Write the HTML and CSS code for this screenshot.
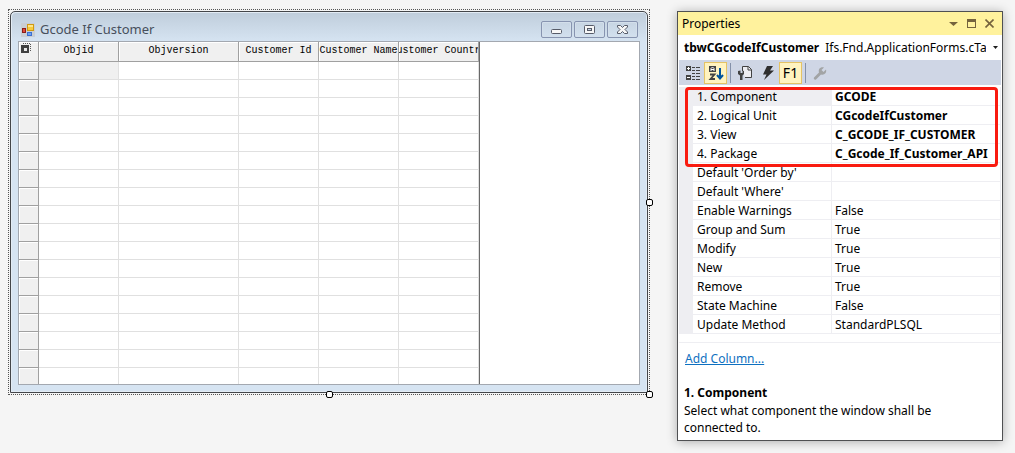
FILE: index.html
```
<!DOCTYPE html>
<html lang="en">
<head>
<meta charset="utf-8">
<title>Gcode If Customer</title>
<link rel="stylesheet" href="styles.css">
</head>
<body>
<main class="designer">
  <section class="selection">
    <div class="form-window">
      <header class="form-title">
        <svg class="form-icon" width="14" height="14" viewBox="0 0 14 14" aria-hidden="true">
          <rect width="14" height="14" fill="#c9ced4"/>
          <rect x="6.5" y="1.5" width="6" height="6" fill="#f8cb3c" stroke="#d09a12"/>
          <path d="M7 2h5v2H7z" fill="#fce68a"/>
          <rect x="1.5" y="5.500" width="3" height="4" fill="#e04a3c" stroke="#8c1d18"/>
          <rect x="6.500" y="9.500" width="4" height="3" fill="#6ea2f2" stroke="#3b6fd0"/>
        </svg>
        <h1 class="form-name">Gcode If Customer</h1>
        <div class="form-buttons">
          <button class="form-button" type="button" aria-label="Minimize">
            <svg width="13" height="11" viewBox="0 0 13 11"><rect x="1.500" y="5.500" width="10" height="4" rx="1" fill="#f7f7f7" stroke="#565b68"/></svg>
          </button>
          <button class="form-button" type="button" aria-label="Maximize">
            <svg width="13" height="11" viewBox="0 0 13 11"><rect x="1.500" y="1.500" width="10" height="8" rx="1" fill="#f7f7f7" stroke="#565b68"/><rect x="4.500" y="4.500" width="4" height="2" fill="#c9d6e6" stroke="#565b68"/></svg>
          </button>
          <button class="form-button" type="button" aria-label="Close">
            <svg width="13" height="11" viewBox="0 0 13 11"><path d="M1.500 1.500h3l2 2 2-2h3v1.500l-2.500 2.500 2.500 2.500v1.500h-3l-2-2-2 2h-3V8L4 5.500 1.500 3z" fill="#f7f7f7" stroke="#565b68"/></svg>
          </button>
        </div>
      </header>
      <div class="form-client">
        <table class="grid">
          <colgroup><col class="col-head"><col class="col-std"><col class="col-wide"><col class="col-std"><col class="col-std"><col class="col-std"></colgroup>
          <thead>
            <tr>
              <th class="corner" aria-label="Select all"><svg width="16" height="14" viewBox="0 0 16 14"><path d="M2 3h8v8H2z" fill="#404040"/><path d="M5 6h3v3H5z" fill="#e8e8e8"/><path d="M4 1.500h8M11.500 2v7" stroke="#555" stroke-dasharray="1 1" fill="none"/></svg></th>
              <th><div class="caption">Objid</div></th>
              <th><div class="caption">Objversion</div></th>
              <th><div class="caption">Customer Id</div></th>
              <th><div class="caption">Customer Name</div></th>
              <th><div class="caption">Customer Country</div></th>
            </tr>
          </thead>
          <tbody>
            <tr><th></th><td class="current"></td><td></td><td></td><td></td><td></td></tr>
            <tr><th></th><td></td><td></td><td></td><td></td><td></td></tr>
            <tr><th></th><td></td><td></td><td></td><td></td><td></td></tr>
            <tr><th></th><td></td><td></td><td></td><td></td><td></td></tr>
            <tr><th></th><td></td><td></td><td></td><td></td><td></td></tr>
            <tr><th></th><td></td><td></td><td></td><td></td><td></td></tr>
            <tr><th></th><td></td><td></td><td></td><td></td><td></td></tr>
            <tr><th></th><td></td><td></td><td></td><td></td><td></td></tr>
            <tr><th></th><td></td><td></td><td></td><td></td><td></td></tr>
            <tr><th></th><td></td><td></td><td></td><td></td><td></td></tr>
            <tr><th></th><td></td><td></td><td></td><td></td><td></td></tr>
            <tr><th></th><td></td><td></td><td></td><td></td><td></td></tr>
            <tr><th></th><td></td><td></td><td></td><td></td><td></td></tr>
            <tr><th></th><td></td><td></td><td></td><td></td><td></td></tr>
            <tr><th></th><td></td><td></td><td></td><td></td><td></td></tr>
            <tr><th></th><td></td><td></td><td></td><td></td><td></td></tr>
            <tr><th></th><td></td><td></td><td></td><td></td><td></td></tr>
            <tr class="cut"><th></th><td></td><td></td><td></td><td></td><td></td></tr>
          </tbody>
        </table>
      </div>
    </div>
    <span class="handle handle-right"></span>
    <span class="handle handle-bottom"></span>
    <span class="handle handle-corner"></span>
  </section>

  <aside class="panel">
    <header class="panel-title">
      <h2 class="panel-name">Properties</h2>
      <button class="panel-button" type="button" aria-label="Window position"><svg width="9" height="9" viewBox="0 0 9 9"><path d="M0 3h9L4.500 7z" fill="#75633d"/></svg></button>
      <button class="panel-button" type="button" aria-label="Maximize"><svg width="9" height="9" viewBox="0 0 9 9"><path d="M0 0h9v9H0zM1 3v5h7V3z" fill="#75633d" fill-rule="evenodd"/></svg></button>
      <button class="panel-button" type="button" aria-label="Close"><svg width="9" height="9" viewBox="0 0 9 9"><path d="M.5.5l8 8M8.500.5l-8 8" stroke="#75633d" stroke-width="1.600"/></svg></button>
    </header>
    <div class="object-row">
      <label class="object-name" for="object">tbwCGcodeIfCustomer</label>
      <select class="object-type" id="object"><option>Ifs.Fnd.ApplicationForms.cTableWindow</option></select>
      <svg class="object-arrow" width="7" height="4" viewBox="0 0 7 4" aria-hidden="true"><path d="M1 0h5L3.500 3z" fill="#1e1e1e"/></svg>
    </div>
    <div class="toolbar">
      <button class="tool" type="button" aria-label="Categorized">
        <svg width="16" height="16" viewBox="0 0 16 16"><path d="M1 1h5v5H1zM1 10h5v5H1z" fill="#424242"/><path d="M2 3h3v1H2zM3 2h1v3H3zM2 12h3v1H2z" fill="#fff"/><path d="M7 2.500h3m1 0h4M7 5.500h3m1 0h4M7 8.500h3m1 0h4M7 11.500h3m1 0h4M7 14.500h3m1 0h4" stroke="#424242"/></svg>
      </button>
      <button class="tool tool-on" type="button" aria-label="Alphabetical" aria-pressed="true">
        <svg width="16" height="16" viewBox="0 0 16 16"><path d="M1 1h7v6H1z" fill="#424242"/><path d="M3 6V3.500L4.500 2 6 3.500V6M3 4.500h3" stroke="#fff" fill="none"/><path d="M2 9.500h4.500L2.500 14H7" stroke="#424242" stroke-width="1.800" fill="none"/><path d="M12 3v10M9 10l3 3.500 3-3.500" stroke="#00539c" stroke-width="2" fill="none"/></svg>
      </button>
      <span class="divider"></span>
      <button class="tool" type="button" aria-label="Properties">
        <svg width="16" height="16" viewBox="0 0 16 16"><path d="M5.500 6V1.500h6l3 3v8H8" fill="#eeeef2" stroke="#424242"/><path d="M11 1.500v3.500h3.500" fill="none" stroke="#424242"/><path d="M1 6v3l2 1.500V15h2.500v-4.500L7 9V6L5.500 5.500V8h-2V5.500z" fill="#424242"/></svg>
      </button>
      <button class="tool" type="button" aria-label="Events">
        <svg width="16" height="16" viewBox="0 0 16 16"><path d="M7 1h6L10 5.500h4L4 15l2.500-5.500H3z" fill="#2f2f2f"/></svg>
      </button>
      <button class="tool tool-on tool-text" type="button">F1</button>
      <span class="divider"></span>
      <button class="tool" type="button" aria-label="Property pages" disabled>
        <svg width="16" height="16" viewBox="0 0 16 16"><path d="M2 12.500L7 7.500C6 4 8.500 1.500 12 2.500L9.500 5l2 2L14 4.500C15 8 12 10.500 9 9.500l-5 5c-1.300.8-2.800-.7-2-2z" fill="#a2a4a5"/></svg>
      </button>
    </div>
    <div class="property-area">
      <table class="properties">
        <colgroup><col class="col-gutter"><col class="col-name"><col></colgroup>
        <tbody>
          <tr class="selected changed"><td></td><th scope="row">1. Component</th><td>GCODE</td></tr>
          <tr class="changed"><td></td><th scope="row">2. Logical Unit</th><td>CGcodeIfCustomer</td></tr>
          <tr class="changed"><td></td><th scope="row">3. View</th><td>C_GCODE_IF_CUSTOMER</td></tr>
          <tr class="changed"><td></td><th scope="row">4. Package</th><td>C_Gcode_If_Customer_API</td></tr>
          <tr><td></td><th scope="row">Default 'Order by'</th><td></td></tr>
          <tr><td></td><th scope="row">Default 'Where'</th><td></td></tr>
          <tr><td></td><th scope="row">Enable Warnings</th><td>False</td></tr>
          <tr><td></td><th scope="row">Group and Sum</th><td>True</td></tr>
          <tr><td></td><th scope="row">Modify</th><td>True</td></tr>
          <tr><td></td><th scope="row">New</th><td>True</td></tr>
          <tr><td></td><th scope="row">Remove</th><td>True</td></tr>
          <tr><td></td><th scope="row">State Machine</th><td>False</td></tr>
          <tr><td></td><th scope="row">Update Method</th><td>StandardPLSQL</td></tr>
        </tbody>
      </table>
      <span class="highlight"></span>
    </div>
    <div class="commands"><a class="command" href="#add-column">Add Column...</a></div>
    <div class="help">
      <h3 class="help-title">1. Component</h3>
      <p class="help-text">Select what component the window shall be connected to.</p>
    </div>
  </aside>
</main>
</body>
</html>
```
FILE: styles.css
```
* { box-sizing: border-box; }

body {
  margin: 0;
  background: #f5f5f5;
  color: #000;
  font-family: "Noto Sans", "Open Sans", sans-serif;
  font-size: 12px;
  line-height: 17px;
}

h1, h2, h3, p { margin: 0; font-size: inherit; font-weight: normal; }

button {
  padding: 0;
  border: 0;
  background: none;
  color: inherit;
  font: inherit;
}

svg { display: block; }

.designer {
  display: flex;
  align-items: flex-start;
  gap: 27px;
  padding: 9px 12px 12px 8px;
}

/* Form under design */
.selection {
  position: relative;
  flex: 1;
  min-width: 500px;
  padding: 1px;
  border: 1px dotted #555;
}

.form-window {
  padding: 0 7px 7px;
  border: 1px solid #44464a;
  border-radius: 5px 5px 0 0;
  background: linear-gradient(#bfcddb, #d6e4f2 30px);
  box-shadow: inset 1px 1px #e3ecf5, inset -1px -1px #e3ecf5;
}

.form-title {
  display: flex;
  align-items: center;
  gap: 5px;
  height: 29px;
  padding: 6px 2px 0 3px;
}

.form-name {
  flex: 1;
  color: #474f5c;
  font-size: 13px;
}

.form-buttons { display: flex; gap: 2px; }

.form-button {
  display: flex;
  align-items: center;
  justify-content: center;
  width: 31px;
  height: 17px;
  border: 1px solid #8794b0;
  border-radius: 2px;
  box-shadow: inset 0 0 0 1px #d3dfeb;
}

.form-client {
  border: 1px solid #a3a8b0;
  background: #fff;
}

.grid {
  width: 461px;
  table-layout: fixed;
  border-collapse: separate;
  border-spacing: 0;
  border-right: 1px solid #696969;
}

.grid th, .grid td {
  height: 18px;
  padding: 0;
  border-right: 1px solid #e0e0e0;
  border-bottom: 1px solid #e0e0e0;
}

.grid th {
  border-color: #a0a0a0;
  background: #f0f0f0;
  box-shadow: inset 1px 1px #fff;
}

.grid thead th {
  height: 20px;
  vertical-align: top;
}

.grid .current { background: #f0f0f0; }

.grid .cut th, .grid .cut td {
  height: 16px;
  border-bottom: 0;
}

.col-head { width: 20px; }
.col-std { width: 80px; }
.col-wide { width: 120px; }

.caption {
  display: flex;
  justify-content: center;
  overflow: hidden;
  font: 10px/17px "Liberation Mono", monospace;
  white-space: nowrap;
}

.handle {
  position: absolute;
  width: 7px;
  height: 7px;
  border: 1px solid #000;
  border-radius: 2px;
  background: #fff;
}

.handle-right { right: -4px; top: 50%; margin-top: -3px; }
.handle-bottom { bottom: -4px; left: 50%; margin-left: -3px; }
.handle-corner { right: -4px; bottom: -4px; }

/* Properties panel */
.panel {
  width: 326px;
  margin-top: 2px;
  border: 1px solid #4f5052;
  background: #fff;
  box-shadow: 0 1px 10px rgba(0, 0, 0, 0.3);
}

.panel-title {
  display: flex;
  align-items: center;
  gap: 9px;
  height: 23px;
  padding: 0 8px 0 4px;
  background: #fff29d;
}

.panel-name { flex: 1; }

.object-row {
  display: flex;
  align-items: center;
  gap: 6px;
  height: 25px;
  padding: 0 3px 0 6px;
}

.object-name { font-weight: bold; }

.object-type {
  flex: 1;
  min-width: 0;
  padding: 0;
  border: 0;
  background: none;
  color: inherit;
  font: inherit;
  appearance: none;
  text-overflow: clip;
}

.toolbar {
  display: flex;
  align-items: center;
  height: 25px;
  margin: 0 1px;
  padding-left: 2px;
  background: #cfd6e5;
}

.tool {
  display: flex;
  align-items: center;
  justify-content: center;
  width: 23px;
  height: 22px;
}

.tool-on {
  border: 1px solid #e5c365;
  background: #fff3c0;
}

.tool-text { font-size: 14px; }

.divider {
  width: 1px;
  height: 20px;
  margin: 0 2px 0 3px;
  background: #8591a9;
}

.property-area {
  position: relative;
  margin: 0 1px;
  padding: 2px 0 8px;
  border-bottom: 1px solid #eeeef2;
}

.properties {
  width: 100%;
  table-layout: fixed;
  border-collapse: separate;
  border-spacing: 0;
}

.properties th, .properties td {
  height: 19px;
  padding: 2px 0 0 4px;
  border-right: 1px solid #eeeef2;
  border-bottom: 1px solid #eeeef2;
  font-weight: normal;
  line-height: 16px;
  text-align: left;
  white-space: nowrap;
}

.properties td:last-child { padding-left: 3px; }
.properties td:first-child, .properties .selected th { background: #eeeef2; }
.properties .changed td { font-weight: bold; }

.col-gutter { width: 14px; }
.col-name { width: 139px; }

.highlight {
  position: absolute;
  top: 2px;
  left: 6px;
  right: 3px;
  height: 80px;
  border: 3px solid #f91b10;
  border-radius: 4px;
}

.commands { padding: 7px 7px 8px; }
.command { color: #0e70c0; text-decoration: underline; }

.help { padding: 8px 6px 4px; }
.help-title { line-height: 19px; font-weight: bold; }
.help-text { max-width: 280px; }
```
